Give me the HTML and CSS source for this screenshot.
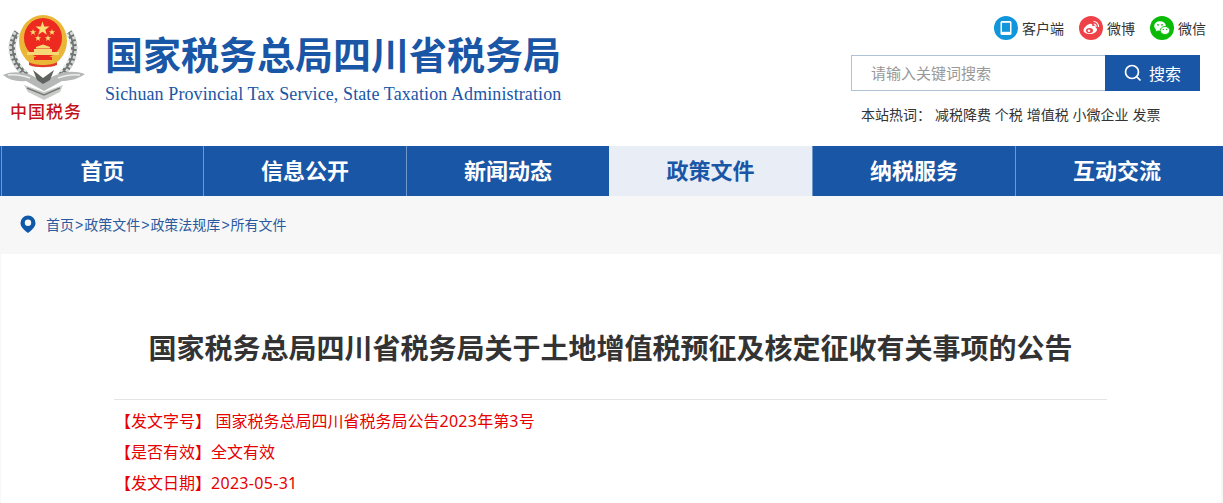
FILE: index.html
```html
<!DOCTYPE html>
<html lang="zh-CN">
<head>
  <meta charset="UTF-8">
  <title>国家税务总局四川省税务局</title>
  <link rel="stylesheet" href="styles.css">
</head>
<body>
  <header class="header">
    <div class="logo">
      <svg class="emblem" width="90" height="102" viewBox="0 0 90 102">
        <!-- wreath -->
        <path d="M17 32C9 44 10 62 27 76" fill="none" stroke="#6f7472" stroke-width="6"/>
        <path d="M69 32C77 44 76 62 60 76" fill="none" stroke="#6f7472" stroke-width="6"/>
        <path d="M15 32C7 44 8 62 25 76" fill="none" stroke="#d6d9d8" stroke-width="3.500" stroke-dasharray="3 2"/>
        <path d="M19 34C12 46 13 60 29 74" fill="none" stroke="#e6e8e7" stroke-width="2.500" stroke-dasharray="3 2.500"/>
        <path d="M71 32C79 44 78 62 62 76" fill="none" stroke="#d6d9d8" stroke-width="3.500" stroke-dasharray="3 2"/>
        <path d="M67 34C74 46 73 60 58 74" fill="none" stroke="#e6e8e7" stroke-width="2.500" stroke-dasharray="3 2.500"/>
        <!-- wings and band -->
        <path d="M3 75C12 71 22 72 31 75L43 81L56 75C65 71 76 71 85 74C78 79 70 81 62 81L44 91L26 81C17 82 9 80 3 75Z" fill="#b5b8b6"/>
        <path d="M8 75C16 74 24 76 30 78M80 75C72 74 64 76 58 78" fill="none" stroke="#eceeed" stroke-width="1.500"/>
        <path d="M33 70L43 78L54 70L50 80L43 84L37 80Z" fill="#5f6360"/>
        <path d="M24 85L44 92L63 85L60 92L44 100L28 92Z" fill="#c9cbc8"/>
        <path d="M27 88L44 95L60 88" fill="none" stroke="#777b77" stroke-width="1.500"/>
        <!-- national emblem -->
        <ellipse cx="43" cy="41" rx="24" ry="26" fill="#e9b638"/>
        <ellipse cx="43" cy="38" rx="19" ry="20" fill="#ec2a20"/>
        <path d="M42.500 21.500l1.700 5 5.300 .1-4.200 3.200 1.500 5-4.300-3-4.300 3 1.500-5-4.200-3.200 5.300-.1z" fill="#f9df74"/>
        <path d="M33 29l.8 2.200 2.300 .1-1.800 1.400 .6 2.200-1.900-1.300-1.900 1.300 .6-2.200-1.800-1.400 2.300-.1z" fill="#f9df74"/>
        <path d="M52 29l.8 2.200 2.300 .1-1.800 1.400 .6 2.200-1.900-1.300-1.900 1.300 .6-2.200-1.800-1.400 2.300-.1z" fill="#f9df74"/>
        <path d="M38 35l.8 2.200 2.300 .1-1.800 1.400 .6 2.200-1.900-1.300-1.900 1.300 .6-2.200-1.800-1.400 2.300-.1z" fill="#f9df74"/>
        <path d="M48 35l.8 2.200 2.300 .1-1.800 1.400 .6 2.200-1.900-1.300-1.900 1.300 .6-2.200-1.800-1.400 2.300-.1z" fill="#f9df74"/>
        <path d="M36 47l7-2.500 7 2.500v1.500H36zM34 49h18v3H34zM27 52h32v3H27z" fill="#f5d977"/>
        <path d="M34 57h18v3H34z" fill="#ec2a20"/>
        <path d="M29 62c5 4 23 4 28 0v3c-6 3-22 3-28 0z" fill="#e23d24"/>
      </svg>
      <div class="logo-mark">中国税务</div>
    </div>
    <div class="site-name">
      <div class="site-cn">国家税务总局四川省税务局</div>
      <div class="site-en">Sichuan Provincial Tax Service, State Taxation Administration</div>
    </div>
    <div class="tools">
      <div class="links">
        <a class="link">
          <svg width="24" height="24" viewBox="0 0 24 24"><circle cx="12" cy="12" r="12" fill="#1296db"/><rect x="6.500" y="5" width="11" height="14" rx="1.500" fill="#fff"/><rect x="8" y="6.800" width="8" height="9" fill="#1296db"/></svg>
          客户端
        </a>
        <a class="link">
          <svg width="24" height="24" viewBox="0 0 24 24"><circle cx="12" cy="12" r="12" fill="#ee4248"/><path d="M4.500 14.500c0-3 4-6.500 7-6.800 2-.2 2 1.500 1.700 2.500 2-.8 4-.4 3.500 1.500 1 .4 1.300 1 1.300 1.800 0 2.500-3.500 4.500-7 4.500s-6.500-1.400-6.500-3.500z" fill="#fff"/><ellipse cx="10.500" cy="14.600" rx="3.500" ry="2.700" fill="#ee4248"/><circle cx="10" cy="14.800" r="1.300" fill="#fff"/><path d="M14.500 5.500a5 5 0 0 1 5 5.500M14.800 8a2.500 2.500 0 0 1 2.300 2.800" fill="none" stroke="#fff" stroke-width="1.200"/></svg>
          微博
        </a>
        <a class="link">
          <svg width="24" height="24" viewBox="0 0 24 24"><circle cx="12" cy="12" r="12" fill="#09bb07"/><ellipse cx="10" cy="10" rx="5.800" ry="4.800" fill="#fff"/><path d="M6.500 13l-.8 2.500 2.800-1.500z" fill="#fff"/><ellipse cx="15" cy="14.500" rx="4.800" ry="4" fill="#fff" stroke="#09bb07" stroke-width=".9"/><circle cx="8" cy="8.800" r=".9" fill="#09bb07"/><circle cx="12" cy="8.800" r=".9" fill="#09bb07"/><circle cx="13.300" cy="13.500" r=".7" fill="#09bb07"/><circle cx="16.700" cy="13.500" r=".7" fill="#09bb07"/></svg>
          微信
        </a>
      </div>
      <form class="search">
        <input class="search-input" type="text" placeholder="请输入关键词搜索">
        <button class="search-btn" type="button">
          <svg width="18" height="18" viewBox="0 0 18 18"><circle cx="8" cy="8" r="6.500" fill="none" stroke="#fff" stroke-width="1.700"/><path d="M12.800 12.800L16.500 16.500" stroke="#fff" stroke-width="1.700"/></svg>
          搜索
        </button>
      </form>
      <div class="hot">
        <span>本站热词：</span>
        <a>减税降费</a> <a>个税</a> <a>增值税</a> <a>小微企业</a> <a>发票</a>
      </div>
    </div>
  </header>

  <nav class="nav">
    <a class="nav-item">首页</a>
    <a class="nav-item">信息公开</a>
    <a class="nav-item">新闻动态</a>
    <a class="nav-item active">政策文件</a>
    <a class="nav-item">纳税服务</a>
    <a class="nav-item">互动交流</a>
  </nav>

  <div class="crumbs">
    <svg width="16" height="18" viewBox="0 0 16 18"><path d="M8 0.500a7.500 7.500 0 0 0-7.500 7.500c0 4 4 7.500 7.500 10 3.500-2.500 7.500-6 7.500-10A7.500 7.500 0 0 0 8 0.500z" fill="#0f58a8"/><circle cx="8" cy="7.800" r="3.200" fill="#f7f7f7"/></svg>
    <span>首页<i class="sep">&gt;</i>政策文件<i class="sep">&gt;</i>政策法规库<i class="sep">&gt;</i>所有文件</span>
  </div>

  <main class="article">
    <h1 class="title">国家税务总局四川省税务局关于土地增值税预征及核定征收有关事项的公告</h1>
    <div class="meta">
      <p class="meta-row">【发文字号】 国家税务总局四川省税务局公告<span class="num">2023</span>年第<span class="num">3</span>号</p>
      <p class="meta-row">【是否有效】全文有效</p>
      <p class="meta-row">【发文日期】<span class="num">2023-05-31</span></p>
    </div>
  </main>
</body>
</html>
```

FILE: styles.css
```css
html, body{
  height: 100%;
  overflow: hidden;
}
body{
  margin: 0;
  background-color: #f7f7f7;
  font-family: "Liberation Sans", "Noto Sans CJK SC", sans-serif;
  color: #333;
}
.header{
  display: flex;
  height: 146px;
  background-color: white;
}
.logo{
  width: 105px;
  flex: none;
}
.emblem{
  display: block;
}
.logo-mark{
  width: 92px;
  text-align: center;
  color: #c4121a;
  font-size: 17px;
  letter-spacing: 1px;
  line-height: 22px;
  font-weight: 500;
}
.site-name{
  padding-top: 33px;
}
.site-cn{
  color: #1a56a6;
  font-size: 38px;
  line-height: 46px;
  font-weight: bold;
}
.site-en{
  margin-top: 4px;
  color: #1a56a6;
  font-family: "Liberation Serif", serif;
  font-size: 18px;
  letter-spacing: .1px;
  line-height: 22px;
  white-space: nowrap;
}
.tools{
  margin-left: auto;
  width: 372px;
  padding-top: 16px;
}
.links{
  display: flex;
  justify-content: flex-end;
  padding-right: 17px;
  gap: 15px;
  height: 39px;
}
.link{
  display: flex;
  align-items: center;
  gap: 4px;
  height: 24px;
  font-size: 14px;
}
.search{
  display: flex;
  width: 349px;
  height: 36px;
}
.search-input{
  width: 254px;
  box-sizing: border-box;
  border: 1px solid #b0c2d6;
  border-right: none;
  outline: none;
  padding: 0 19px;
  font-size: 15px;
  font-family: inherit;
}
.search-input::placeholder{
  color: #999;
}
.search-btn{
  flex: 1;
  display: flex;
  align-items: center;
  justify-content: center;
  gap: 7px;
  border: none;
  background-color: #1a56a6;
  color: white;
  font-size: 16px;
  font-family: inherit;
}
.hot{
  margin-top: 14px;
  padding-left: 10px;
  font-size: 14px;
  line-height: 20px;
}
.nav{
  display: flex;
  height: 50px;
  background-color: #1a56a6;
  padding-left: 1px;
}
.nav-item{
  width: 203px;
  border-left: 1px solid #6f97cc;
  box-sizing: border-box;
  text-align: center;
  color: white;
  font-size: 22px;
  font-weight: bold;
  line-height: 51px;
}
.nav-item:first-child{
  width: 202px;
}
.nav-item.active{
  background-color: #e8edf6;
  color: #1a56a6;
  border-left: none;
}
.crumbs{
  display: flex;
  align-items: center;
  gap: 10px;
  height: 56px;
  padding: 0 0 2px 20px;
  color: #2a5a9e;
  font-size: 14px;
}
.sep{
  font-style: normal;
  margin: 0 1px;
}
.article{
  box-sizing: border-box;
  height: 249px;
  margin: 0 2px 0 1px;
  padding: 75px 114px 0 113px;
  background-color: white;
}
.title{
  margin: 0;
  padding-bottom: 28px;
  border-bottom: 1px solid #e5e5e5;
  text-align: center;
  font-size: 28px;
  line-height: 42px;
  color: #333;
}
.meta{
  padding: 6px 0 0 1px;
  color: #e60000;
  font-size: 16px;
}
.meta-row{
  margin: 0;
  line-height: 31px;
}
.num{
  font-family: "Noto Sans", sans-serif;
  letter-spacing: .3px;
}
```
